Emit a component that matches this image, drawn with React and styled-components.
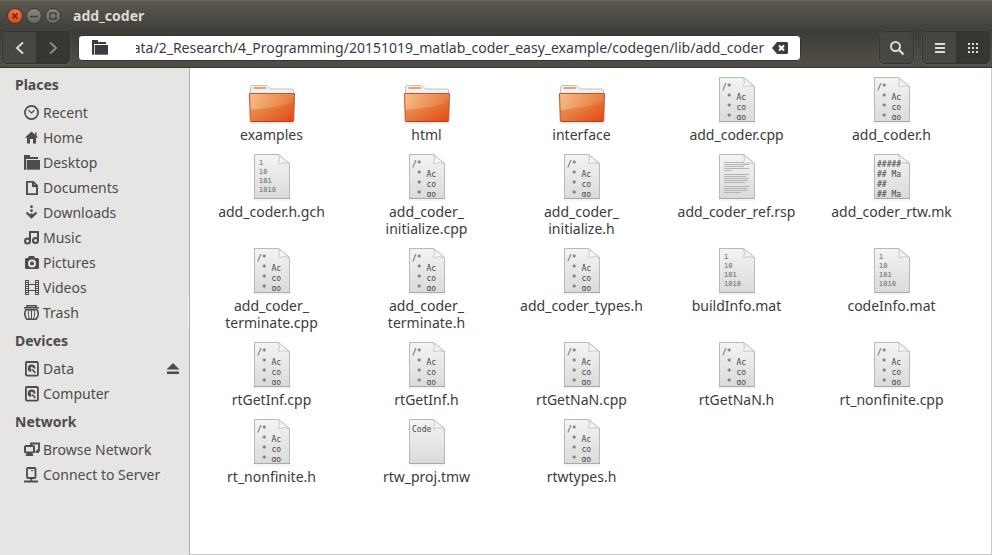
import React, { useLayoutEffect, useRef } from "react";
import styled, { createGlobalStyle, css } from "styled-components";

const GlobalStyle = createGlobalStyle`
  * {
    box-sizing: border-box;
  }
  body {
    margin: 0;
    background-color: #3c3b37;
    font-family: "Noto Sans", "Open Sans", sans-serif;
    font-size: 14px;
    color: #3c3c3c;
  }
  button, input {
    font: inherit;
    color: inherit;
  }
  button {
    padding: 0;
    border: none;
    background: none;
  }
`;

const Window = styled.div`
  min-height: 100vh;
  display: flex;
  flex-direction: column;
`;

const TitleBar = styled.header`
  height: 30px;
  display: flex;
  align-items: center;
  gap: 3px;
  padding: 0 7px;
  background: linear-gradient(#5c5950, #403f3a);
  border-top: 1px solid #6b675c;
`;

const WindowButton = styled.button`
  width: 16px;
  height: 16px;
  display: flex;
  align-items: center;
  justify-content: center;
  border-radius: 50%;
  border: 1px solid #383733;
  background: ${(props) =>
    props.$close
      ? "linear-gradient(#f6743f, #df4a16)"
      : "linear-gradient(#8a877d, #68665e)"};
`;

const Title = styled.h1`
  margin: 0 9px;
  font-size: 14px;
  line-height: 20px;
  font-weight: 700;
  color: #dfdbd2;
`;

const Toolbar = styled.div`
  height: 38px;
  display: flex;
  align-items: center;
  gap: 8px;
  padding: 0 2px 2px;
  background: linear-gradient(#3c3b37, #524f47);
  border-bottom: 1px solid #33322e;
`;

const ButtonGroup = styled.div`
  display: flex;
  border: 1px solid #33322e;
  border-radius: 5px;
  overflow: hidden;
  box-shadow: 0 0 0 1px rgba(255, 255, 255, 0.06);
`;

const ToolButton = styled.button`
  width: 33px;
  height: 31px;
  display: flex;
  align-items: center;
  justify-content: center;
  color: ${(props) => (props.$dim ? "#8d8a80" : "#dfdbd2")};
  background: linear-gradient(#45443f, #4a4842);
  ${(props) =>
    props.$pressed &&
    css`
      background: #373632;
    `}
`;

const PathBar = styled.label`
  flex: 1;
  min-width: 0;
  height: 26px;
  display: flex;
  align-items: center;
  padding: 0 12px 0 13px;
  margin-right: 70px;
  border-radius: 4px;
  border: 1px solid #35342f;
  background-color: #fff;
  color: #3c3c3c;
`;

const PathInput = styled.input`
  flex: 1;
  min-width: 0;
  height: 20px;
  margin: 0 8px 0 28px;
  padding: 0;
  border: none;
  outline: none;
  background: none;
`;

const ClearButton = styled.button`
  display: flex;
`;

const Body = styled.div`
  flex: 1;
  display: flex;
`;

const Sidebar = styled.nav`
  position: relative;
  width: 190px;
  flex-shrink: 0;
  padding-top: 1px;
  background-color: #e6e5e3;
  border-right: 1px solid #b5b3af;
  color: #4c4c4c;
`;

const Grip = styled.div`
  position: absolute;
  right: 0;
  top: 50%;
  height: 30px;
  margin-top: -15px;
  border-right: 1px dotted #fff;
`;

const SectionTitle = styled.h2`
  margin: 0;
  padding-left: 15px;
  font-size: 14px;
  line-height: 31px;
  font-weight: 700;
`;

const PlaceList = styled.ul`
  margin: 0;
  padding: 0;
  list-style: none;
`;

const PlaceItem = styled.li`
  display: flex;
  align-items: center;
  height: 25px;
  padding: 0 9px 0 24px;
`;

const PlaceLink = styled.a`
  flex: 1;
  display: flex;
  align-items: center;
  gap: 3px;
  line-height: 25px;
  color: inherit;
  text-decoration: none;
`;

const EjectButton = styled.button`
  display: flex;
`;

const Files = styled.main`
  flex: 1;
  display: grid;
  grid-template-columns: repeat(auto-fill, 155px);
  align-content: start;
  row-gap: 10px;
  padding: 8px 0 0 4px;
  background-color: #fff;
  border: 1px solid #cbc9c4;
  border-width: 0 1px 1px 0;
`;

const FileItem = styled.a`
  display: flex;
  flex-direction: column;
  align-items: center;
  gap: 2px;
  color: inherit;
  text-decoration: none;
`;

const FileName = styled.span`
  max-width: 136px;
  line-height: 17px;
  text-align: center;
`;

const PreviewText = styled.text`
  font-family: "DejaVu Sans Mono", monospace;
  font-size: ${(props) => (props.$small ? "7px" : "8px")};
  font-weight: ${(props) => (props.$small ? 700 : 400)};
  fill: ${(props) => (props.$small ? "#8c8c8c" : "#444")};
  white-space: pre;
`;

const placeIcons = {
  recent: (
    <>
      <circle cx="7.5" cy="7.5" r="6.6" fill="none" stroke="currentColor" strokeWidth="1.7" />
      <path d="M4.5 5.2 7.5 8 10.5 5.2" fill="none" stroke="currentColor" strokeWidth="1.2" />
    </>
  ),
  home: <path d="M7.5 1.500.8 7.700H3V13.500h3V9h3v4.500h3V7.700h2.200L12.500 6V2.500H11v2.200z" fill="currentColor" />,
  folder: (
    <>
      <path d="M0 0h6v2h8v2H2v10.700H0z" fill="currentColor" />
      <path d="M2.700 5H16v9.700H2.700z" fill="currentColor" />
    </>
  ),
  document: (
    <path d="M3 1.900h6.200L13 5.700V14.100H3zM9 2v4h4" fill="none" stroke="currentColor" strokeWidth="1.900" />
  ),
  download: (
    <>
      <circle cx="7.500" cy="1.700" r="1.400" fill="currentColor" />
      <circle cx="7.500" cy="5.700" r="1.400" fill="currentColor" />
      <path d="M2.500 7.500l5 4.800 5-4.800" fill="none" stroke="currentColor" strokeWidth="2.200" />
      <circle cx="7.500" cy="9.500" r="1.300" fill="currentColor" />
    </>
  ),
  music: (
    <>
      <path d="M6 11.500V2h8v8.500" fill="none" stroke="currentColor" strokeWidth="2" />
      <circle cx="3.500" cy="11" r="2.500" fill="none" stroke="currentColor" strokeWidth="2" />
      <circle cx="11.500" cy="10.500" r="2.500" fill="none" stroke="currentColor" strokeWidth="2" />
    </>
  ),
  camera: (
    <path
      d="M5 1h5l1 2h3l1 1v9l-1 1H2l-1-1V4l1-1h2zM8 4.500a4 4 0 1 0 0 8 4 4 0 0 0 0-8zM8 6.500a2 2 0 1 1 0 4 2 2 0 0 1 0-4z"
      fill="currentColor"
      fillRule="evenodd"
    />
  ),
  video: (
    <>
      <path d="M4.500 0v15M11.500 0v15M1.500 0v15M14.500 0v15M4 4.500h8M4 10.500h8" fill="none" stroke="currentColor" />
      <path d="M3 0v15M13 0v15" fill="none" stroke="currentColor" strokeWidth="2" strokeDasharray="1 1" />
    </>
  ),
  trash: (
    <>
      <path d="M3 2V.800h9V2M0 2.800h15" fill="none" stroke="currentColor" strokeWidth="1.600" />
      <path d="M1.800 4.800h11.400c1.600 3 1.300 6.500-1 9.500H2.800c-2.300-3-2.600-6.500-1-9.500z" fill="none" stroke="currentColor" strokeWidth="1.500" />
      <path d="M5 5c-1 3-.8 6 .5 9M7.500 5v9M10 5c1 3 .8 6-.5 9" fill="none" stroke="currentColor" />
    </>
  ),
  disk: (
    <>
      <rect x="1.900" y="1" width="12" height="13.600" rx="1" fill="none" stroke="currentColor" strokeWidth="1.800" />
      <path d="M7 11A3.800 3.800 0 1 1 11.300 8L9 7A1.200 1.200 0 1 0 7.500 8.200z" fill="currentColor" />
      <path d="M8.300 8.500l3 3.500" stroke="currentColor" strokeWidth="1.700" />
    </>
  ),
  network: (
    <>
      <path d="M7 3V1.500h8v7h-2.500" fill="none" stroke="currentColor" strokeWidth="1.800" />
      <rect x="1" y="4" width="9" height="6.500" rx="1" fill="none" stroke="currentColor" strokeWidth="2" />
      <path d="M3 11h5l1.500 3h-8zM11.500 9H15v2h-3.500z" fill="currentColor" />
    </>
  ),
  server: (
    <>
      <rect x="3" y="1" width="8.500" height="10" rx="1" fill="none" stroke="currentColor" strokeWidth="1.800" />
      <path d="M7 3.500h2.500" stroke="currentColor" />
      <path d="M7.300 11v4M0 14.500h14" fill="none" stroke="currentColor" strokeWidth="1.800" />
    </>
  ),
};

const sections = [
  {
    title: "Places",
    items: [
      { name: "Recent", icon: "recent" },
      { name: "Home", icon: "home" },
      { name: "Desktop", icon: "folder" },
      { name: "Documents", icon: "document" },
      { name: "Downloads", icon: "download" },
      { name: "Music", icon: "music" },
      { name: "Pictures", icon: "camera" },
      { name: "Videos", icon: "video" },
      { name: "Trash", icon: "trash" },
    ],
  },
  {
    title: "Devices",
    items: [
      { name: "Data", icon: "disk", ejectable: true },
      { name: "Computer", icon: "disk" },
    ],
  },
  {
    title: "Network",
    items: [
      { name: "Browse Network", icon: "network" },
      { name: "Connect to Server", icon: "server" },
    ],
  },
];

const files = [
  { name: "examples", type: "folder" },
  { name: "html", type: "folder" },
  { name: "interface", type: "folder" },
  { name: "add_coder.cpp", type: "source" },
  { name: "add_coder.h", type: "source" },
  { name: "add_coder.h.gch", type: "binary" },
  { name: "add_coder_initialize.cpp", type: "source" },
  { name: "add_coder_initialize.h", type: "source" },
  { name: "add_coder_ref.rsp", type: "text" },
  { name: "add_coder_rtw.mk", type: "make" },
  { name: "add_coder_terminate.cpp", type: "source" },
  { name: "add_coder_terminate.h", type: "source" },
  { name: "add_coder_types.h", type: "source" },
  { name: "buildInfo.mat", type: "binary" },
  { name: "codeInfo.mat", type: "binary" },
  { name: "rtGetInf.cpp", type: "source" },
  { name: "rtGetInf.h", type: "source" },
  { name: "rtGetNaN.cpp", type: "source" },
  { name: "rtGetNaN.h", type: "source" },
  { name: "rt_nonfinite.cpp", type: "source" },
  { name: "rt_nonfinite.h", type: "source" },
  { name: "rtw_proj.tmw", type: "project" },
  { name: "rtwtypes.h", type: "source" },
];

const previews = {
  source: ["/*", " * Ac", " * co", " * go"],
  make: ["#####", "## Ma", "##", "## Ma"],
  project: ["Code"],
  binary: ["1", "10", "101", "1010"],
};

const textLines = [25, 25, 20, 25, 8, 0, 25, 22, 25, 24, 21, 0, 25, 23, 24, 17];

function PlaceIcon({ name }) {
  return (
    <svg width="16" height="16" viewBox="0 0 16 16" aria-hidden="true">
      {placeIcons[name]}
    </svg>
  );
}

// gradients and clips shared by every file icon
function IconDefs() {
  return (
    <svg width="0" height="0" style={{ position: "absolute" }} aria-hidden="true">
      <defs>
        <linearGradient id="paper" x1="0" y1="0" x2="0" y2="1">
          <stop offset="0" stopColor="#f4f4f4" />
          <stop offset="1" stopColor="#dadada" />
        </linearGradient>
        <linearGradient id="fold" x1="0" y1="1" x2="1" y2="0">
          <stop offset="0" stopColor="#fff" />
          <stop offset="0.500" stopColor="#f0f0f0" />
          <stop offset="1" stopColor="#c4c4c4" />
        </linearGradient>
        <linearGradient id="folder" x1="0" y1="0" x2="1" y2="1">
          <stop offset="0" stopColor="#eda267" />
          <stop offset="0.500" stopColor="#e67c40" />
          <stop offset="1" stopColor="#e5450f" />
        </linearGradient>
        <linearGradient id="shine" x1="0" y1="0" x2="1" y2="0">
          <stop offset="0" stopColor="#fbdcae" stopOpacity="0.500" />
          <stop offset="1" stopColor="#f0a060" stopOpacity="0.200" />
        </linearGradient>
        <clipPath id="page">
          <rect x="7" y="2" width="34" height="42" />
        </clipPath>
      </defs>
    </svg>
  );
}

function FolderIcon() {
  return (
    <svg width="48" height="48" viewBox="0 0 48 48" aria-hidden="true">
      <path d="M1 47h46" stroke="#000" strokeOpacity="0.150" />
      <path d="M2.500 20V10.500l1-1H19l3.500 3.500h22l1 1V20z" fill="#f1f1f1" stroke="#c2c2c2" />
      <path d="M5.500 12H18" stroke="#f0a068" strokeWidth="2" />
      <path d="M1.500 17.500h45l-.8 27.500-.7.500H3l-.700-.500z" fill="url(#folder)" stroke="#c9542a" />
      <path d="M2 18h44v6C38 31 22 31 3 34z" fill="url(#shine)" />
      <path d="M3 45.500h42" stroke="#c03a10" />
    </svg>
  );
}

function PageIcon({ type }) {
  const small = type === "binary";
  return (
    <svg width="48" height="48" viewBox="0 0 48 48" aria-hidden="true">
      <path d="M6 47h36" stroke="#000" strokeOpacity="0.080" />
      <path d="M6.500 1.500h24l11 9v35h-35z" fill="url(#paper)" stroke="#b9b9b9" />
      <path d="M6 45.500h36" stroke="#a8a8a8" />
      {type === "text" &&
        textLines.map((width, i) => (
          <path
            key={i}
            d={`M11 ${9.5 + i * 2}h${width}`}
            stroke="#b4b4b4"
          />
        ))}
      <path d="M30.500 1.500q2 5 0 9 6-1.500 11 0z" fill="url(#fold)" stroke="#bdbdbd" strokeWidth="0.800" />
      <g clipPath="url(#page)">
        {(previews[type] || []).map((line, i) => (
          <PreviewText
            key={i}
            $small={small}
            x={small ? 11 : 9}
            y={small ? 12 + i * 9 : 14 + i * 10}
          >
            {line}
          </PreviewText>
        ))}
      </g>
    </svg>
  );
}

// long names may wrap after their last underscore
function BreakableName({ name }) {
  const cut = name.lastIndexOf("_") + 1;
  if (!cut) return name;
  return (
    <>
      {name.slice(0, cut)}
      <wbr />
      {name.slice(cut)}
    </>
  );
}

function App() {
  const pathRef = useRef(null);

  useLayoutEffect(() => {
    pathRef.current.scrollLeft = pathRef.current.scrollWidth;
  }, []);

  return (
    <Window>
      <GlobalStyle />
      <IconDefs />
      <TitleBar>
        <WindowButton $close aria-label="Close">
          <svg width="8" height="8" viewBox="0 0 8 8">
            <path d="M1.500 1.500l5 5M6.500 1.500l-5 5" stroke="#4a2a1c" strokeWidth="1.500" />
          </svg>
        </WindowButton>
        <WindowButton aria-label="Minimize">
          <svg width="8" height="8" viewBox="0 0 8 8">
            <path d="M0 4.500h8" stroke="#3c3b37" strokeWidth="1.400" />
          </svg>
        </WindowButton>
        <WindowButton aria-label="Maximize">
          <svg width="8" height="8" viewBox="0 0 8 8">
            <rect x="1" y="1" width="6" height="6" fill="none" stroke="#3c3b37" strokeWidth="1.300" />
          </svg>
        </WindowButton>
        <Title>add_coder</Title>
      </TitleBar>
      <Toolbar>
        <ButtonGroup>
          <ToolButton aria-label="Back">
            <svg width="12" height="14" viewBox="0 0 12 14">
              <path d="M9 1.500 3 7l6 5.500" fill="none" stroke="currentColor" strokeWidth="2" />
            </svg>
          </ToolButton>
          <ToolButton $dim $pressed aria-label="Forward">
            <svg width="12" height="14" viewBox="0 0 12 14">
              <path d="M3 1.500 9 7l-6 5.500" fill="none" stroke="currentColor" strokeWidth="2" />
            </svg>
          </ToolButton>
        </ButtonGroup>
        <PathBar>
          <PlaceIcon name="folder" />
          <PathInput
            ref={pathRef}
            aria-label="Location"
            defaultValue="/media/Data/2_Research/4_Programming/20151019_matlab_coder_easy_example/codegen/lib/add_coder"
          />
          <ClearButton aria-label="Clear">
            <svg width="16" height="12" viewBox="0 0 16 12">
              <path d="M5 0h10l1 1v10l-1 1H5L0 6z" fill="#3c3c3c" />
              <path d="M7 3.500l5 5M12 3.500l-5 5" stroke="#fff" strokeWidth="2" />
            </svg>
          </ClearButton>
        </PathBar>
        <ButtonGroup>
          <ToolButton aria-label="Search">
            <svg width="16" height="16" viewBox="0 0 16 16">
              <circle cx="6.500" cy="6.500" r="4.500" fill="none" stroke="currentColor" strokeWidth="2" />
              <path d="M9.800 9.800l4.700 4.700" stroke="currentColor" strokeWidth="2.200" />
            </svg>
          </ToolButton>
        </ButtonGroup>
        <ButtonGroup>
          <ToolButton aria-label="List view">
            <svg width="10" height="10" viewBox="0 0 10 10">
              <path d="M0 1h10M0 5h10M0 9h10" stroke="currentColor" strokeWidth="2" />
            </svg>
          </ToolButton>
          <ToolButton $pressed aria-label="Icon view">
            <svg width="10" height="10" viewBox="0 0 10 10">
              <path
                d="M0 1h10M0 5h10M0 9h10"
                stroke="currentColor"
                strokeWidth="2"
                strokeDasharray="2 2"
              />
            </svg>
          </ToolButton>
        </ButtonGroup>
      </Toolbar>
      <Body>
        <Sidebar>
          {sections.map((section) => (
            <React.Fragment key={section.title}>
              <SectionTitle>{section.title}</SectionTitle>
              <PlaceList>
                {section.items.map((item) => (
                  <PlaceItem key={item.name}>
                    <PlaceLink href="#">
                      <PlaceIcon name={item.icon} />
                      {item.name}
                    </PlaceLink>
                    {item.ejectable && (
                      <EjectButton aria-label="Eject">
                        <svg width="14" height="12" viewBox="0 0 14 12">
                          <path d="M7 0l6.500 6.500h-13zM1 8.500h12v2.500H1z" fill="#4c4c4c" />
                        </svg>
                      </EjectButton>
                    )}
                  </PlaceItem>
                ))}
              </PlaceList>
            </React.Fragment>
          ))}
          <Grip />
        </Sidebar>
        <Files>
          {files.map((file) => (
            <FileItem href="#" key={file.name}>
              {file.type === "folder" ? <FolderIcon /> : <PageIcon type={file.type} />}
              <FileName>
                <BreakableName name={file.name} />
              </FileName>
            </FileItem>
          ))}
        </Files>
      </Body>
    </Window>
  );
}

export default App;
